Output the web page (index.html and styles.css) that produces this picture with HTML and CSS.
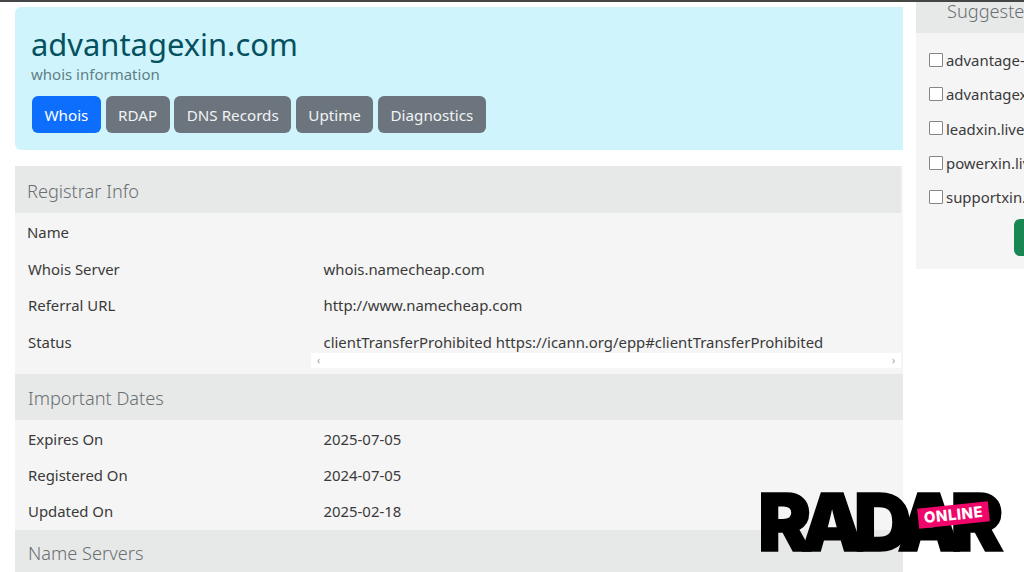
FILE: index.html
```html
<!DOCTYPE html>
<html lang="en">
<head>
<meta charset="utf-8">
<title>advantagexin.com whois</title>
<link rel="stylesheet" href="styles.css">
</head>
<body>
<div class="page">
  <main class="main">
    <header class="hero">
      <h1>advantagexin.com</h1>
      <p class="sub">whois information</p>
      <nav class="tabs">
        <a class="tab active">Whois</a>
        <a class="tab">RDAP</a>
        <a class="tab">DNS Records</a>
        <a class="tab">Uptime</a>
        <a class="tab">Diagnostics</a>
      </nav>
    </header>
    <section class="card">
      <h2 class="head first">Registrar Info</h2>
      <div class="rows name-row"><div class="row"><span>Name</span><span></span></div></div>
      <div class="rows">
        <div class="row"><span>Whois Server</span><span>whois.namecheap.com</span></div>
        <div class="row"><span>Referral URL</span><span>http://www.namecheap.com</span></div>
        <div class="row"><span>Status</span><span>clientTransferProhibited https://icann.org/epp#clientTransferProhibited</span></div>
      </div>
      <div class="scrollbar"><span>‹</span><span>›</span></div>
      <h2 class="head">Important Dates</h2>
      <div class="rows dates">
        <div class="row"><span>Expires On</span><span>2025-07-05</span></div>
        <div class="row"><span>Registered On</span><span>2024-07-05</span></div>
        <div class="row"><span>Updated On</span><span>2025-02-18</span></div>
      </div>
      <h2 class="head last">Name Servers</h2>
    </section>
  </main>
  <aside class="side">
    <h2 class="side-head">Suggested Domains</h2>
    <ul class="list">
      <li><span class="check"></span>advantage-xin.com</li>
      <li><span class="check"></span>advantagexin.live</li>
      <li><span class="check"></span>leadxin.live</li>
      <li><span class="check"></span>powerxin.live</li>
      <li><span class="check"></span>supportxin.live</li>
    </ul>
    <div class="btn-row"><a class="go">Check</a></div>
  </aside>
</div>
<div class="logo"><span class="radar">RADAR</span><span class="online">ONLINE</span></div>
</body>
</html>
```
FILE: styles.css
```css
* { box-sizing: border-box; }
html, body { margin: 0; height: 572px; overflow: hidden; background: #fff; }
body { font-family: "Noto Sans", "Open Sans", sans-serif; color: #333; border-top: 2px solid #454545; position: relative; }
.page { display: flex; align-items: flex-start; padding-left: 15px; gap: 13px; width: 1024px; overflow: hidden; height: 570px; }
.main { width: 888px; flex: none; padding-top: 5px; }
.hero { height: 143px; background: #cff4fc; border-radius: 6px 0 0 6px; padding: 19px 16px 0; }
h1 { margin: 0; font-size: 30.9px; line-height: 36px; font-weight: 400; color: #055160; }
.sub { margin: 1px 0 0; font-size: 15px; line-height: 22px; color: #5f7f86; }
.tabs { display: flex; gap: 4.6px; margin-top: 11px; padding-left: 1px; }
.tab { display: block; height: 37px; line-height: 39px; padding: 0 12.5px; background: #6c757d; color: #f2f3f4; border-radius: 6px; font-size: 15.2px; }
.tab.active { background: #0d6efd; color: #fff; }
.card { margin-top: 16px; background: #f5f5f5; }
.head { margin: 0; height: 46px; line-height: 48px; padding-left: 13px; background: #e7e9e8; font-size: 18.2px; font-weight: 300; color: #6a6f72; }
.head.first { height: 47px; margin-right: 2px; padding-left: 12px; line-height: 50px; }
.head.last { line-height: 46px; }
.rows { padding: 0 13px; }
.dates { padding-top: .5px; }
.name-row { height: 37.8px; margin-right: 2px; }
.name-row .row { height: 38px; margin-left: -1px; }
.row { display: grid; grid-template-columns: 295.5px 1fr; height: 36.4px; align-items: center; font-size: 14.9px; color: #3a3a3a; white-space: nowrap; }
.scrollbar { height: 15px; margin: -7px 2px 6px 296px; background: #fff; display: flex; justify-content: space-between; padding: 0 6px; font-size: 10px; line-height: 15px; color: #999; position: relative; }
.side { width: 200px; flex: none; margin-top: -14px; height: 281px; background: #f5f5f5; }
.side-head { margin: 0 0 10px; height: 45px; line-height: 47px; padding-left: 31px; background: #e7e9e8; font-size: 18.2px; font-weight: 300; color: #6a6f72; white-space: nowrap; }
.list { list-style: none; margin: 0; padding: 0 0 0 13px; }
.list li { display: flex; align-items: center; height: 34.3px; font-size: 14.9px; color: #3a3a3a; white-space: nowrap; }
.check { width: 14px; height: 14px; margin: -1px 3px 0 0; background: #fff; border: 1.5px solid #858585; border-radius: 1px; flex: none; }
.btn-row { padding: 5px 0 0 98px; }
.go { display: block; width: 70px; height: 37px; line-height: 37px; padding-left: 12px; background: #198754; color: #fff; border-radius: 6px; font-size: 15px; }
.logo { position: absolute; left: 758px; top: 489px; width: 246px; height: 62px; overflow: visible; }
.radar { display: block; font-family: "Inter", "Liberation Sans", sans-serif; font-weight: 900; font-size: 80px; line-height: 62px; letter-spacing: -10.6px; color: #000; -webkit-text-stroke: 1.5px #000; white-space: nowrap; }
.online { position: absolute; left: 160px; top: 14px; width: 71px; height: 20px; line-height: 20px; text-align: center; background: #f0056b; color: #fff; font-family: "Inter", "Liberation Sans", sans-serif; font-weight: 800; font-size: 15px; letter-spacing: .5px; transform: rotate(-6deg); }
```
